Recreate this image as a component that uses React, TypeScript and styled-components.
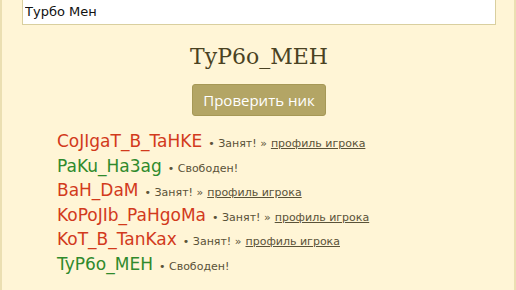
import React from "react";
import styled, { createGlobalStyle } from "styled-components";

const GlobalStyle = createGlobalStyle`
  html, body {
    margin: 0;
    padding: 0;
    background: #fff5d6;
  }
`;

const Page = styled.div`
  width: 516px;
  height: 290px;
  box-sizing: border-box;
  background: #fff5d6;
  border-left: 2px solid #ebdfb2;
  border-right: 2px solid #ebdfb2;
  padding: 0 18px 0 20px;
  font-family: "DejaVu Sans", Verdana, sans-serif;
  overflow: hidden;
`;

const NickInput = styled.input`
  display: block;
  width: 100%;
  height: 25px;
  box-sizing: border-box;
  margin: 0;
  padding: 0 2px 1px;
  border: 1px solid #d9cf9f;
  border-top: none;
  background: #fff;
  font-family: "DejaVu Sans", Verdana, sans-serif;
  font-size: 13px;
  color: #111;
  outline: none;
`;

const Title = styled.h1`
  margin: 17px 0 0;
  text-align: center;
  font-family: "DejaVu Serif", Georgia, serif;
  font-weight: normal;
  font-size: 22px;
  line-height: 30px;
  color: #4a4222;
`;

const ButtonRow = styled.div`
  display: flex;
  justify-content: center;
  margin-top: 12px;
`;

const CheckButton = styled.button`
  height: 32px;
  padding: 0 10px;
  border: 1px solid #a69856;
  border-radius: 3px;
  background: #b3a565;
  color: #fff;
  font-family: "Open Sans", "Noto Sans", sans-serif;
  font-size: 15px;
  cursor: pointer;
`;

const List = styled.ul`
  list-style: none;
  margin: 15px 0 0;
  padding: 0 0 0 35px;
`;

const Item = styled.li`
  height: 24.6px;
  display: flex;
  align-items: baseline;
  white-space: nowrap;
`;

const Nick = styled.span<{ taken: boolean }>`
  font-size: 17px;
  color: ${p => (p.taken ? "#d23a1c" : "#2f8a2c")};
  margin-right: 6px;
`;

const Status = styled.span`
  font-size: 11px;
  color: #5a5238;
`;

const ProfileLink = styled.a`
  color: #5a5238;
  text-decoration: underline;
  margin-left: 4px;
`;

const nicks = [
  { name: "CoJIgaT_B_TaHKE", taken: true },
  { name: "PaKu_Ha3ag", taken: false },
  { name: "BaH_DaM", taken: true },
  { name: "KoPoJIb_PaHgoMa", taken: true },
  { name: "KoT_B_TanKax", taken: true },
  { name: "TyP6o_MEH", taken: false },
];

export default function App() {
  return (
    <>
      <GlobalStyle />
      <Page>
        <NickInput defaultValue="Турбо Мен" />
        <Title>TyP6o_MEH</Title>
        <ButtonRow>
          <CheckButton>Проверить ник</CheckButton>
        </ButtonRow>
        <List>
          {nicks.map(n => (
            <Item key={n.name}>
              <Nick taken={n.taken}>{n.name}</Nick>
              <Status>
                • {n.taken ? "Занят!" : "Свободен!"}
                {n.taken && (
                  <>
                    {" »"}
                    <ProfileLink href="#">профиль игрока</ProfileLink>
                  </>
                )}
              </Status>
            </Item>
          ))}
        </List>
      </Page>
    </>
  );
}
